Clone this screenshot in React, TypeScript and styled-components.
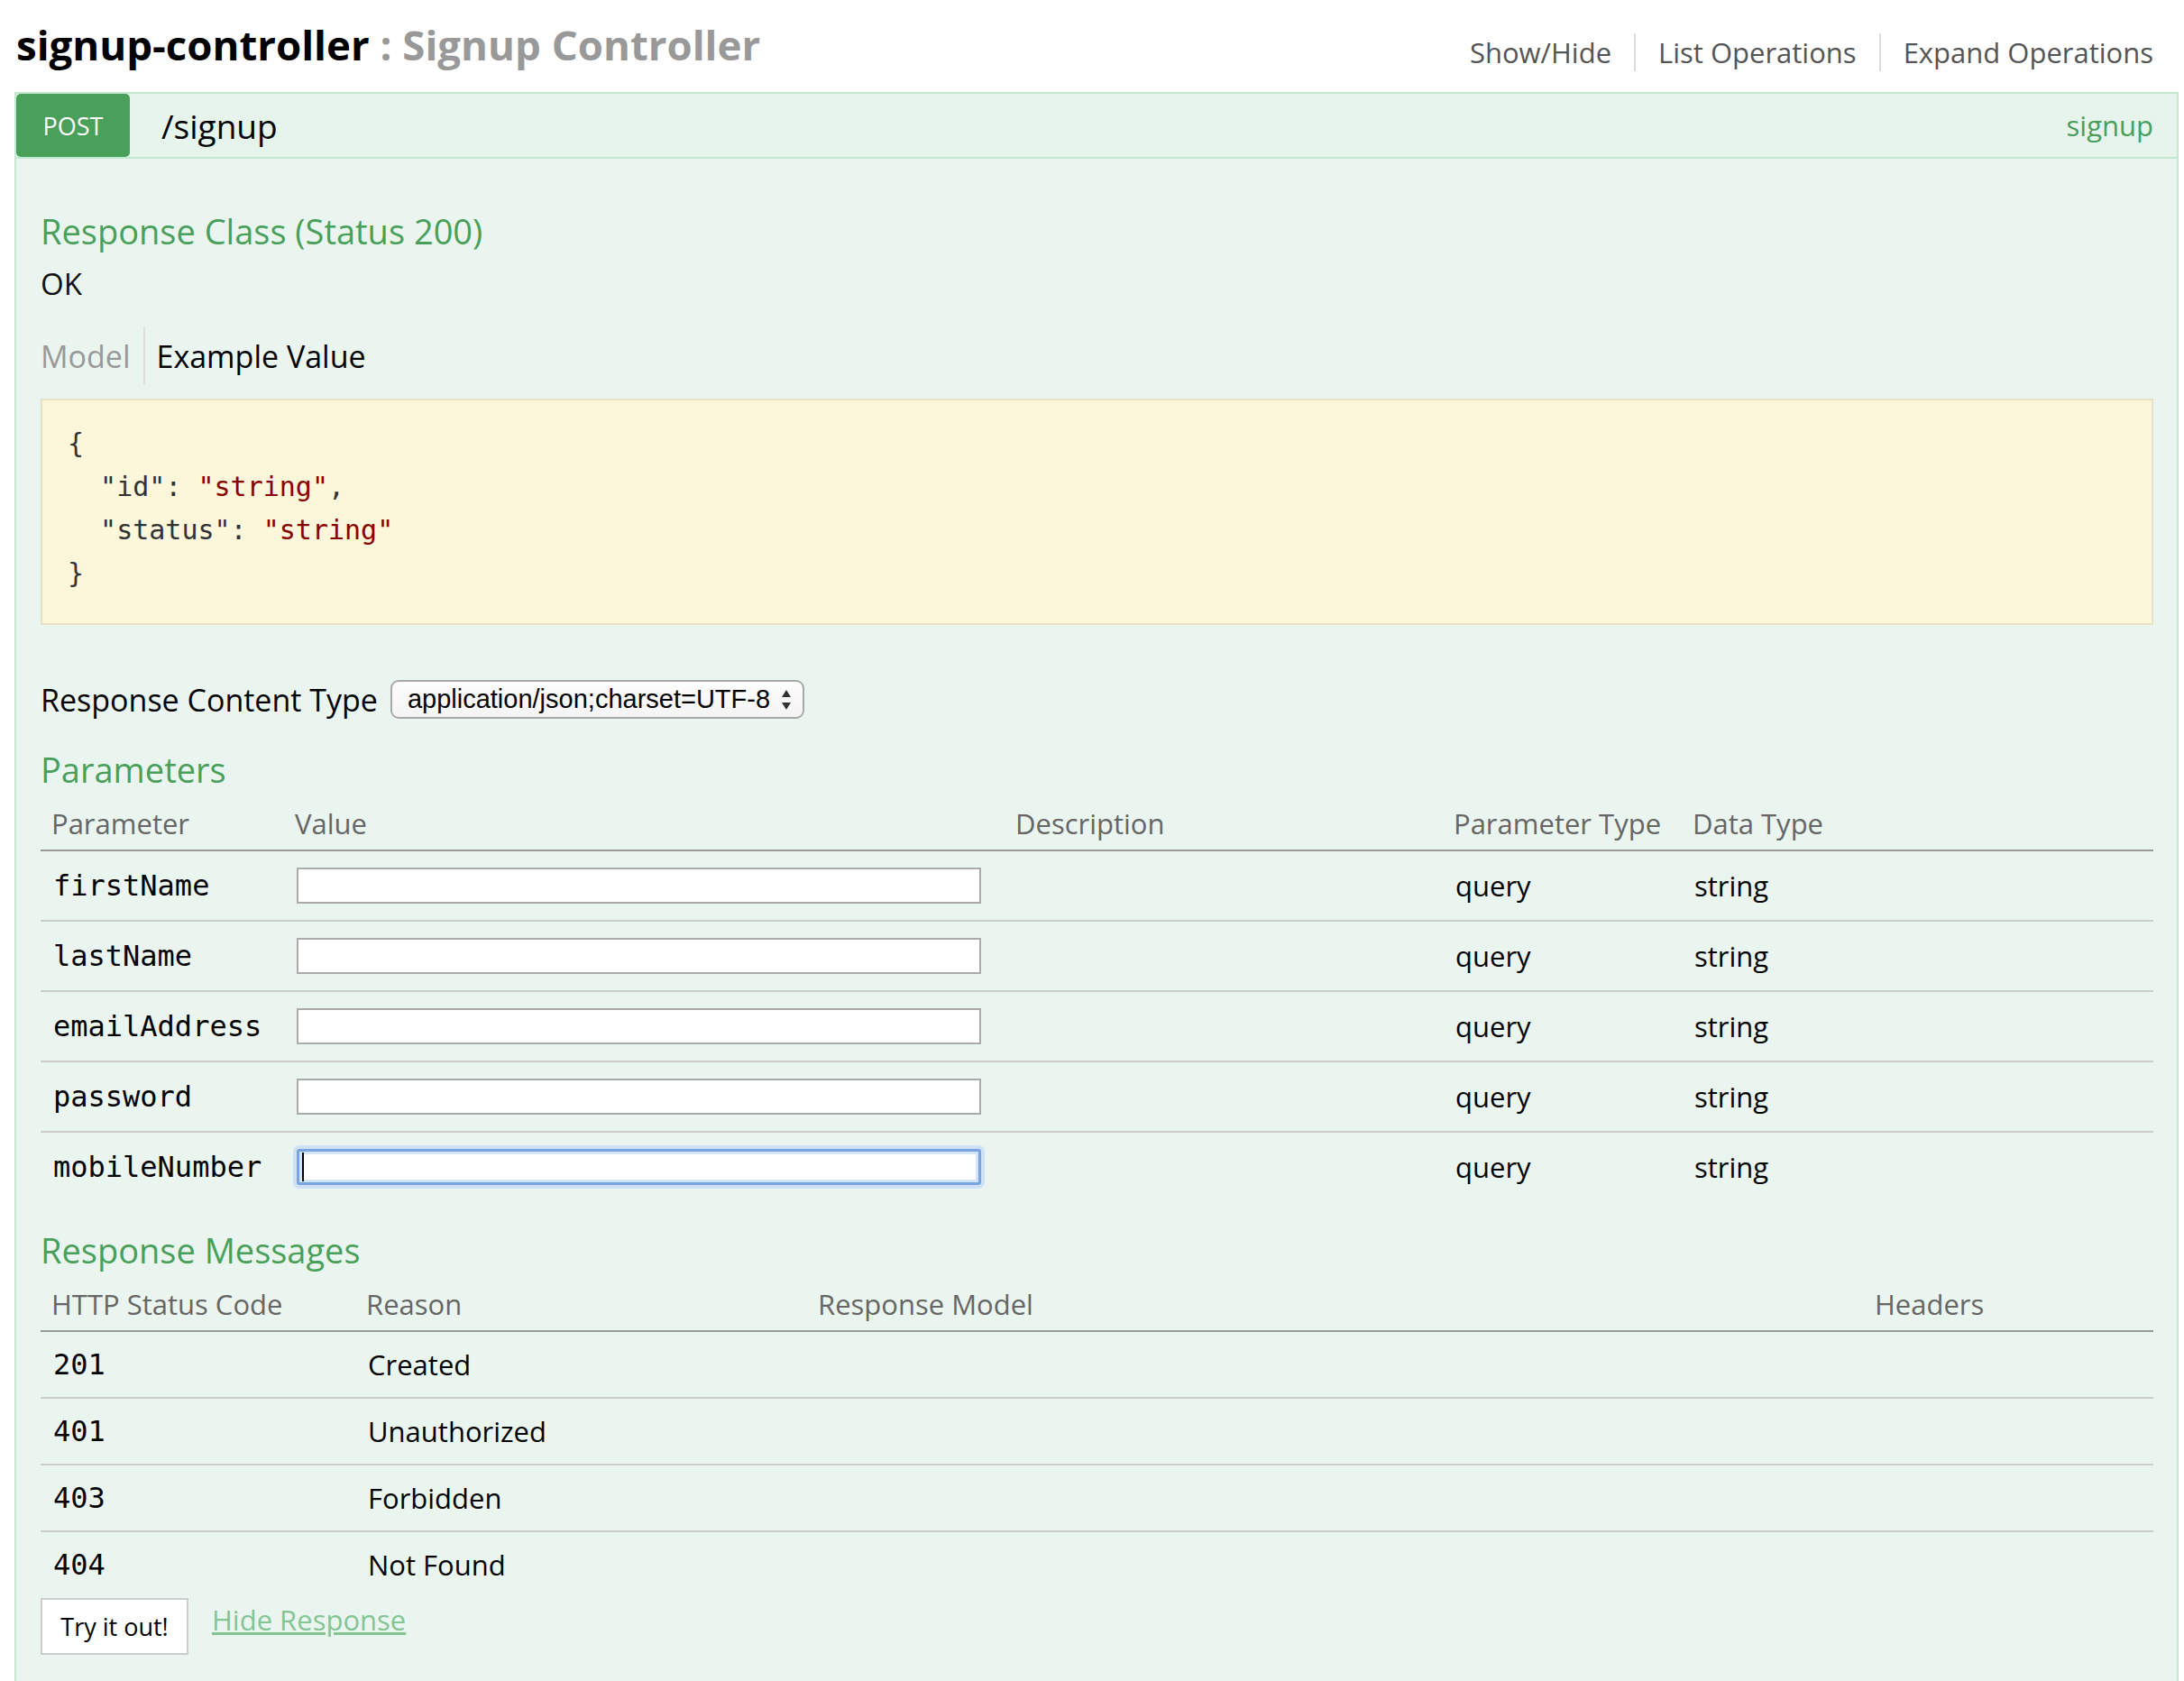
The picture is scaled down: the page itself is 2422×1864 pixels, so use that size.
import React from 'react';
import styled, { createGlobalStyle } from 'styled-components';

const GlobalStyle = createGlobalStyle`
  html, body {
    margin: 0;
    padding: 0;
    background: #fff;
  }
  body {
    font-family: "Open Sans", "Noto Sans", sans-serif;
    color: #000;
  }
  * {
    box-sizing: border-box;
  }
`;

const GREEN = '#49a05a';
const BORDER_GREEN = '#c3e8d1';
const MONO = '"DejaVu Sans Mono", "Liberation Mono", monospace';

const Page = styled.div`
  width: 2416px;
  padding-left: 16px;
`;

const ResourceHeader = styled.div`
  display: flex;
  justify-content: space-between;
  align-items: flex-start;
  height: 102px;
  padding: 0 28px 0 2px;
`;

const Title = styled.h2`
  margin: 0;
  padding-top: 19px;
  font-size: 45.6px;
  line-height: 60px;
  font-weight: 700;
  color: #000;
`;

const TitleDesc = styled.span`
  color: #999;
`;

const Options = styled.ul`
  display: flex;
  list-style: none;
  margin: 37px 0 0;
  padding: 0;
`;

const OptionLink = styled.li<{ $first?: boolean; $last?: boolean }>`
  font-size: 31px;
  line-height: 42px;
  color: #555;
  padding: 0 ${(p) => (p.$last ? 0 : 25)}px 0 ${(p) => (p.$first ? 0 : 25)}px;
  border-left: ${(p) => (p.$first ? 'none' : '2px solid #ddd')};
`;

const Operation = styled.div`
  border: 2px solid ${BORDER_GREEN};
  border-bottom: none;
`;

const OpHeading = styled.div`
  display: flex;
  align-items: center;
  height: 72px;
  background: #e7f4ec;
  border-bottom: 2px solid ${BORDER_GREEN};
  padding-right: 26px;
`;

const Method = styled.span`
  display: flex;
  align-items: center;
  justify-content: center;
  width: 126px;
  height: 70px;
  background: ${GREEN};
  color: #fff;
  font-size: 27px;
  border-radius: 5px;
`;

const Path = styled.span`
  margin-left: 35px;
  font-size: 37px;
  color: #000;
`;

const Nickname = styled.span`
  margin-left: auto;
  font-size: 31px;
  color: ${GREEN};
`;

const OpContent = styled.div`
  display: flow-root;
  background: #ebf5f0;
  padding: 0 26px 40px 27px;
`;

const SectionTitle = styled.h4<{ $top: number }>`
  margin: ${(p) => p.$top}px 0 0;
  font-size: 38px;
  line-height: 46px;
  font-weight: 400;
  color: ${GREEN};
`;

const StatusText = styled.div`
  margin-top: 16px;
  font-size: 33px;
  line-height: 40px;
  color: #111;
`;

const Tabs = styled.div`
  display: flex;
  align-items: center;
  height: 64px;
  margin-top: 28px;
`;

const Tab = styled.span<{ $active?: boolean }>`
  display: flex;
  align-items: center;
  height: 64px;
  font-size: 34px;
  color: ${(p) => (p.$active ? '#000' : '#999')};
  padding: ${(p) => (p.$active ? '0 0 0 13px' : '0 14px 0 0')};
  border-left: ${(p) => (p.$active ? '2px solid #ddd' : 'none')};
`;

const CodeBox = styled.pre`
  margin: 15px 0 0;
  background: #fcf6db;
  border: 2px solid #e6e0c4;
  padding: 24px 28px 31px;
  font-family: ${MONO};
  font-size: 30px;
  line-height: 48px;
  color: #333;
  white-space: pre;
`;

const StrVal = styled.span`
  color: #880000;
`;

const ContentTypeRow = styled.div`
  display: flex;
  align-items: center;
  margin-top: 61px;
  height: 43px;
`;

const Label = styled.span`
  font-size: 34px;
  color: #000;
`;

const FakeSelect = styled.div`
  display: flex;
  align-items: center;
  justify-content: space-between;
  margin-left: 14px;
  width: 459px;
  height: 43px;
  padding: 0 12px 0 17px;
  border: 2px solid #a8a8a8;
  border-radius: 9px;
  background: linear-gradient(#fdfdfd, #f4f4f4);
  font-family: "Liberation Sans", Arial, sans-serif;
  font-size: 29px;
  color: #000;
`;

const Table = styled.table<{ $top: number }>`
  width: 100%;
  margin-top: ${(p) => p.$top}px;
  border-collapse: separate;
  border-spacing: 0;
  table-layout: fixed;
`;

const Th = styled.th`
  text-align: left;
  font-weight: 400;
  font-size: 31px;
  line-height: 40px;
  color: #666;
  padding: 9px 12px;
  border-bottom: 2px solid #999;
  white-space: nowrap;
`;

const Td = styled.td<{ $mono?: boolean; $pad: number; $last?: boolean }>`
  font-family: ${(p) => (p.$mono ? MONO : 'inherit')};
  font-size: ${(p) => (p.$mono ? 32 : 31)}px;
  line-height: 40px;
  color: #000;
  padding: ${(p) => p.$pad}px 14px;
  border-bottom: ${(p) => (p.$last ? 'none' : '2px solid #ccc')};
  vertical-align: middle;
  white-space: nowrap;
`;

const FieldWrap = styled.span`
  position: relative;
  display: block;
  width: 759px;
`;

const TextField = styled.input<{ $focused?: boolean }>`
  display: block;
  width: 759px;
  height: 40px;
  margin: 0;
  padding: 0 6px;
  background: #fff;
  outline: none;
  border: ${(p) => (p.$focused ? '3px solid #78a5e2' : '2px solid #aaa')};
  border-radius: ${(p) => (p.$focused ? '3px' : '0')};
  box-shadow: ${(p) =>
    p.$focused ? '0 0 0 4px #cfe1f7, inset 0 0 0 3px #d4e4f8' : 'none'};
`;

const Caret = styled.span`
  position: absolute;
  left: 6px;
  top: 4px;
  width: 2px;
  height: 32px;
  background: #000;
`;

const Actions = styled.div`
  display: flex;
  align-items: flex-start;
  margin-top: 1px;
`;

const TryButton = styled.button`
  width: 164px;
  height: 63px;
  background: #fff;
  border: 2px solid #ccc;
  font-family: "Open Sans", sans-serif;
  font-size: 27px;
  color: #000;
  padding: 0;
`;

const HideLink = styled.a`
  margin-left: 26px;
  font-size: 31px;
  line-height: 48px;
  color: #84c596;
  text-decoration: underline;
`;

const params = ['firstName', 'lastName', 'emailAddress', 'password', 'mobileNumber'];

const responses = [
  { code: '201', reason: 'Created' },
  { code: '401', reason: 'Unauthorized' },
  { code: '403', reason: 'Forbidden' },
  { code: '404', reason: 'Not Found' },
];

const SelectArrows = () => (
  <svg width="12" height="24" viewBox="0 0 12 24">
    <path d="M1 9 L6 1 L11 9 Z" fill="#333" />
    <path d="M1 15 L6 23 L11 15 Z" fill="#333" />
  </svg>
);

const App: React.FC = () => {
  return (
    <Page>
      <GlobalStyle />
      <ResourceHeader>
        <Title>
          signup-controller<TitleDesc> : Signup Controller</TitleDesc>
        </Title>
        <Options>
          <OptionLink $first>Show/Hide</OptionLink>
          <OptionLink>List Operations</OptionLink>
          <OptionLink $last>Expand Operations</OptionLink>
        </Options>
      </ResourceHeader>
      <Operation>
        <OpHeading>
          <Method>POST</Method>
          <Path>/signup</Path>
          <Nickname>signup</Nickname>
        </OpHeading>
        <OpContent>
          <SectionTitle $top={57}>Response Class (Status 200)</SectionTitle>
          <StatusText>OK</StatusText>
          <Tabs>
            <Tab>Model</Tab>
            <Tab $active>Example Value</Tab>
          </Tabs>
          <CodeBox>
            {'{\n  "id": '}
            <StrVal>"string"</StrVal>
            {',\n  "status": '}
            <StrVal>"string"</StrVal>
            {'\n}'}
          </CodeBox>
          <ContentTypeRow>
            <Label>Response Content Type</Label>
            <FakeSelect>
              <span>application/json;charset=UTF-8</span>
              <SelectArrows />
            </FakeSelect>
          </ContentTypeRow>

          <SectionTitle $top={33}>Parameters</SectionTitle>
          <Table $top={8}>
            <colgroup>
              <col style={{ width: 270 }} />
              <col style={{ width: 799 }} />
              <col style={{ width: 486 }} />
              <col style={{ width: 265 }} />
              <col />
            </colgroup>
            <thead>
              <tr>
                <Th>Parameter</Th>
                <Th>Value</Th>
                <Th>Description</Th>
                <Th>Parameter Type</Th>
                <Th>Data Type</Th>
              </tr>
            </thead>
            <tbody>
              {params.map((name, i) => {
                const last = i === params.length - 1;
                return (
                  <tr key={name}>
                    <Td $mono $pad={18} $last={last}>{name}</Td>
                    <Td $pad={18} $last={last}>
                      {last ? (
                        <FieldWrap>
                          <TextField $focused type="text" />
                          <Caret />
                        </FieldWrap>
                      ) : (
                        <TextField type="text" />
                      )}
                    </Td>
                    <Td $pad={18} $last={last}></Td>
                    <Td $pad={18} $last={last}>query</Td>
                    <Td $pad={18} $last={last}>string</Td>
                  </tr>
                );
              })}
            </tbody>
          </Table>

          <SectionTitle $top={31}>Response Messages</SectionTitle>
          <Table $top={8}>
            <colgroup>
              <col style={{ width: 349 }} />
              <col style={{ width: 501 }} />
              <col style={{ width: 1172 }} />
              <col />
            </colgroup>
            <thead>
              <tr>
                <Th>HTTP Status Code</Th>
                <Th>Reason</Th>
                <Th>Response Model</Th>
                <Th>Headers</Th>
              </tr>
            </thead>
            <tbody>
              {responses.map((r, i) => {
                const last = i === responses.length - 1;
                return (
                  <tr key={r.code}>
                    <Td $mono $pad={16} $last={last}>{r.code}</Td>
                    <Td $pad={16} $last={last}>{r.reason}</Td>
                    <Td $pad={16} $last={last}></Td>
                    <Td $pad={16} $last={last}></Td>
                  </tr>
                );
              })}
            </tbody>
          </Table>

          <Actions>
            <TryButton>Try it out!</TryButton>
            <HideLink>Hide Response</HideLink>
          </Actions>
        </OpContent>
      </Operation>
    </Page>
  );
};

export default App;
